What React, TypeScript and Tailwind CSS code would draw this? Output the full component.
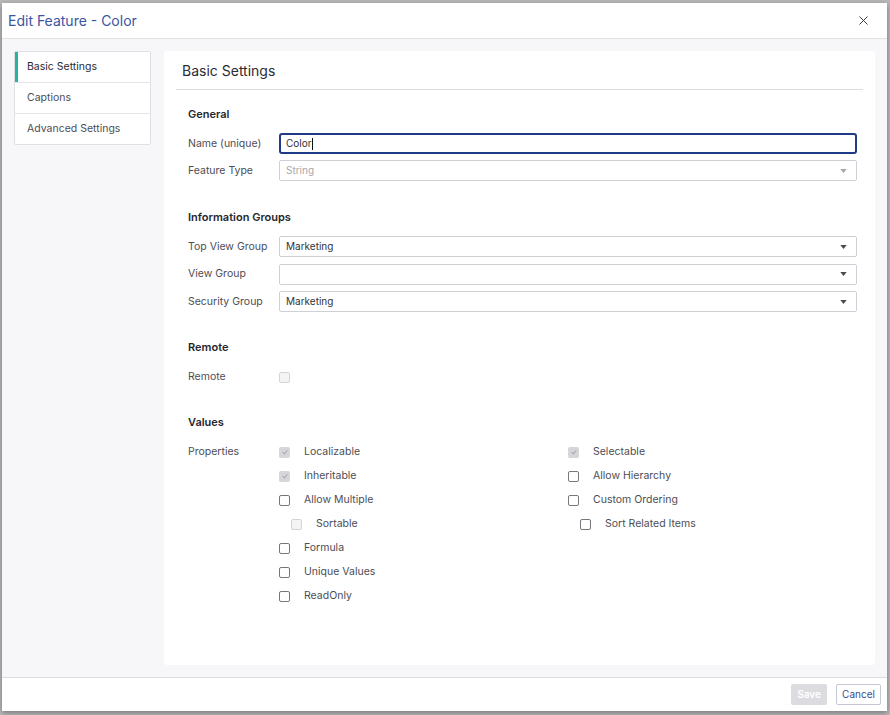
import { X } from "lucide-react";

type Box = "checked" | "off" | "disabled";

type Prop = { label: string; box: Box; nested?: boolean };

const leftProps: Prop[] = [
  { label: "Localizable", box: "checked" },
  { label: "Inheritable", box: "checked" },
  { label: "Allow Multiple", box: "off" },
  { label: "Sortable", box: "disabled", nested: true },
  { label: "Formula", box: "off" },
  { label: "Unique Values", box: "off" },
  { label: "ReadOnly", box: "off" },
];

const rightProps: Prop[] = [
  { label: "Selectable", box: "checked" },
  { label: "Allow Hierarchy", box: "off" },
  { label: "Custom Ordering", box: "off" },
  { label: "Sort Related Items", box: "off", nested: true },
];

function Checkbox({ box }: { box: Box }) {
  if (box === "checked") {
    return (
      <span className="flex h-[11px] w-[11px] items-center justify-center rounded-[2px] bg-[#d6d6d9]">
        <svg viewBox="0 0 10 10" className="h-[8px] w-[8px]">
          <path d="M2 5.2 L4.2 7.4 L8 2.8" fill="none" stroke="#a9a9ae" strokeWidth="1.4" />
        </svg>
      </span>
    );
  }
  if (box === "disabled") {
    return <span className="h-[11px] w-[11px] rounded-[2px] border border-[#d4d4d8] bg-[#f4f4f5]" />;
  }
  return <span className="h-[11px] w-[11px] rounded-[2px] border border-[#76767c] bg-white" />;
}

function Caret({ muted }: { muted?: boolean }) {
  return (
    <svg viewBox="0 0 8 5" className="h-[4px] w-[7px]">
      <path d="M0 0 H8 L4 5 Z" fill={muted ? "#a6a6ab" : "#4a4a50"} />
    </svg>
  );
}

function Select({ value, muted }: { value: string; muted?: boolean }) {
  return (
    <div className="flex h-[21px] flex-1 items-center justify-between rounded-[2px] border border-[#cfcfd6] bg-white pl-[6px] pr-[9px]">
      <span className={muted ? "text-[10px] text-[#a8a8ad]" : "text-[10px] text-[#333338]"}>{value}</span>
      <Caret muted={muted} />
    </div>
  );
}

function Row({ label, children }: { label: string; children: React.ReactNode }) {
  return (
    <div className="flex items-center">
      <span className="w-[91px] shrink-0 text-[10.5px] text-[#4d4d55]">{label}</span>
      {children}
    </div>
  );
}

function Section({
  title,
  children,
  space = "",
  gap = "gap-[6px]",
}: {
  title: string;
  children: React.ReactNode;
  space?: string;
  gap?: string;
}) {
  return (
    <div className={space}>
      <div className="h-4 text-[11px] leading-4 font-semibold text-[#26262c]">{title}</div>
      <div className={`mt-[11px] flex flex-col ${gap}`}>{children}</div>
    </div>
  );
}

function PropItem({ p }: { p: Prop }) {
  return (
    <div className={`flex h-[24px] items-center gap-[14px] ${p.nested ? "pl-[12px]" : ""}`}>
      <Checkbox box={p.box} />
      <span className="text-[10.5px] text-[#4d4d55]">{p.label}</span>
    </div>
  );
}

const navItems = ["Basic Settings", "Captions", "Advanced Settings"];

export default function App() {
  return (
    <div
      className="h-[715px] w-[890px] bg-[#b8b8b8] pt-[3px] pr-[3px] pb-[4px] pl-[2px]"
      style={{ fontFamily: "Inter, 'Liberation Sans', sans-serif" }}
    >
      <div className="flex h-full flex-col bg-white shadow-[0_2px_6px_rgba(0,0,0,0.35)]">
        {/* title bar */}
        <div className="flex h-[36px] shrink-0 items-center justify-between border-b border-[#e1e1e6] pl-[6px] pr-[16px]">
          <span className="text-[14px] text-[#3b55a5]">Edit Feature - Color</span>
          <X size={15} strokeWidth={1.5} className="text-[#2f2f3a]" />
        </div>

        {/* body */}
        <div className="flex flex-1 gap-[13px] bg-[#f7f7f9] p-3">
          <nav className="h-fit w-[137px] shrink-0 rounded-[2px] border border-[#dfdfe4] bg-white">
            {navItems.map((item, i) =>
              i === 0 ? (
                <div
                  key={item}
                  className="flex h-[30px] items-center border-l-[3px] border-[#27b3a1] pl-[9px] text-[10.5px] text-[#2a2a30]"
                >
                  {item}
                </div>
              ) : (
                <div
                  key={item}
                  className="flex h-[31px] items-center border-t border-[#e4e4e8] pl-[12px] text-[10.5px] text-[#4d4d55]"
                >
                  {item}
                </div>
              )
            )}
          </nav>

          <div className="flex-1 rounded-[3px] bg-white">
            <div className="mx-3 flex h-[39px] items-center border-b border-[#dcdce1] pl-[6px]">
              <span className="text-[14px] text-[#2c2c33]">Basic Settings</span>
            </div>

            <div className="pt-[16px] pr-[18px] pl-[24px]">
              <Section title="General">
                <Row label="Name (unique)">
                  <div className="flex h-[21px] flex-1 items-center rounded-[3px] border-2 border-[#1f3a86] bg-white pl-[5px]">
                    <span className="text-[10px] text-[#333338]">Color</span>
                    <span className="ml-px h-[12px] w-px bg-[#111]" />
                  </div>
                </Row>
                <Row label="Feature Type">
                  <Select value="String" muted />
                </Row>
              </Section>

              <Section title="Information Groups" space="mt-[28px]" gap="gap-[6.5px]">
                <Row label="Top View Group">
                  <Select value="Marketing" />
                </Row>
                <Row label="View Group">
                  <Select value="" />
                </Row>
                <Row label="Security Group">
                  <Select value="Marketing" />
                </Row>
              </Section>

              <Section title="Remote" space="mt-[27px]">
                <Row label="Remote">
                  <div className="flex h-[22px] items-center">
                    <Checkbox box="disabled" />
                  </div>
                </Row>
              </Section>

              <div className="mt-[26px]">
                <div className="h-4 text-[11px] leading-4 font-semibold text-[#26262c]">Values</div>
                <div className="mt-[10px] flex">
                  <span className="flex h-[24px] w-[91px] shrink-0 items-center text-[10.5px] text-[#4d4d55]">
                    Properties
                  </span>
                  <div className="grid flex-1 grid-cols-[289px_1fr]">
                    <div className="flex flex-col">
                      {leftProps.map((p) => (
                        <PropItem key={p.label} p={p} />
                      ))}
                    </div>
                    <div className="flex flex-col">
                      {rightProps.map((p) => (
                        <PropItem key={p.label} p={p} />
                      ))}
                    </div>
                  </div>
                </div>
              </div>
            </div>
          </div>
        </div>

        {/* footer */}
        <div className="flex h-[34px] shrink-0 items-center justify-end gap-[9px] border-t border-[#dcdce1] pr-[6px]">
          <button className="h-[21px] w-[36px] rounded-[2px] bg-[#dcdce0] text-[10px] font-semibold text-white">
            Save
          </button>
          <button className="h-[21px] w-[45px] rounded-[2px] border border-[#c4c7d6] bg-white text-[10px] text-[#3c4a8e]">
            Cancel
          </button>
        </div>
      </div>
    </div>
  );
}
